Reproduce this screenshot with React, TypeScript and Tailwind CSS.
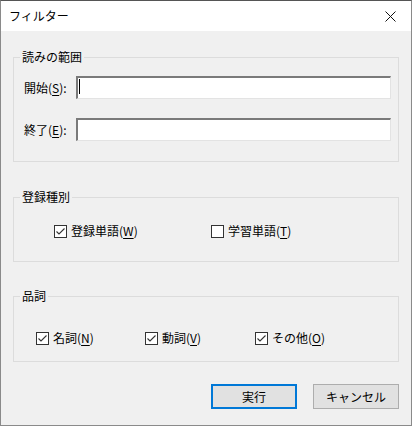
import React from 'react';

const font = { fontFamily: '"Noto Sans CJK JP", "Noto Sans", sans-serif' };

function Key({ k }: { k: string }) {
  return (
    <>
      (<span className="underline underline-offset-2">{k}</span>)
    </>
  );
}

function CheckBox({ checked, label, k }: { checked: boolean; label: string; k: string }) {
  return (
    <label className="flex items-center gap-[4px] text-[12px] leading-[16px] text-black">
      <span className="flex h-[13px] w-[13px] items-center justify-center border border-[#333333] bg-white">
        {checked && (
          <svg width="11" height="11" viewBox="0 0 11 11">
            <path d="M1.5 5.5 L4 8 L9.5 2.5" fill="none" stroke="#333333" strokeWidth="1.1" />
          </svg>
        )}
      </span>
      <span>
        {label}
        <Key k={k} />
      </span>
    </label>
  );
}

function Group({ title, className, children }: { title: string; className?: string; children: React.ReactNode }) {
  return (
    <fieldset className={`border border-[#dcdcdc] ${className ?? ''}`}>
      <legend className="ml-[6px] px-[2px] text-[12px] leading-[16px] text-black">{title}</legend>
      {children}
    </fieldset>
  );
}

function TextBox() {
  return (
    <div className="h-[23px] flex-1 border-t-2 border-l-2 border-t-[#7a7a7a] border-l-[#7a7a7a] border-b border-r border-b-[#e3e3e3] border-r-[#e3e3e3] bg-white" />
  );
}

export default function App() {
  return (
    <div style={font} className="flex h-[426px] w-[412px] flex-col border border-[#8a8a8a] border-t-[#555555] bg-[#f0f0f0]">
      <div className="flex h-[30px] shrink-0 items-center justify-between bg-white pl-[8px] pr-[15px]">
        <span className="text-[12px] leading-[16px] text-black">フィルター</span>
        <svg width="11" height="11" viewBox="0 0 11 11">
          <path d="M0.5 0.5 L10.5 10.5 M10.5 0.5 L0.5 10.5" stroke="#111111" strokeWidth="1" />
        </svg>
      </div>

      <div className="flex flex-1 flex-col px-[12px] pt-[18px]">
        <Group title="読みの範囲">
          <div className="flex flex-col gap-[19px] pb-[20px] pl-[10px] pr-[7px] pt-[11px]">
            <div className="flex items-center">
              <span className="w-[52px] text-[12px] text-black">
                開始<Key k="S" />:
              </span>
              <div className="relative flex flex-1">
                <TextBox />
                <span className="absolute left-[3px] top-[3px] h-[15px] w-px bg-black" />
              </div>
            </div>
            <div className="flex items-center">
              <span className="w-[52px] text-[12px] text-black">
                終了<Key k="E" />:
              </span>
              <TextBox />
            </div>
          </div>
        </Group>

        <Group title="登録種別" className="mt-[27px]">
          <div className="flex pb-[22px] pl-[40px] pt-[18px]">
            <div className="w-[157px]">
              <CheckBox checked label="登録単語" k="W" />
            </div>
            <CheckBox checked={false} label="学習単語" k="T" />
          </div>
        </Group>

        <Group title="品詞" className="mt-[26px]">
          <div className="flex pb-[15px] pl-[22px] pt-[26px]">
            <div className="w-[109px]">
              <CheckBox checked label="名詞" k="N" />
            </div>
            <div className="w-[110px]">
              <CheckBox checked label="動詞" k="V" />
            </div>
            <CheckBox checked label="その他" k="O" />
          </div>
        </Group>

        <div className="mt-[22px] flex justify-end gap-[16px]">
          <button className="h-[25px] w-[86px] border-2 border-[#0078d7] bg-[#e1e1e1] text-[12px] text-black">
            実行
          </button>
          <button className="h-[25px] w-[86px] border border-[#adadad] bg-[#e1e1e1] text-[12px] text-black">
            キャンセル
          </button>
        </div>
      </div>
    </div>
  );
}
